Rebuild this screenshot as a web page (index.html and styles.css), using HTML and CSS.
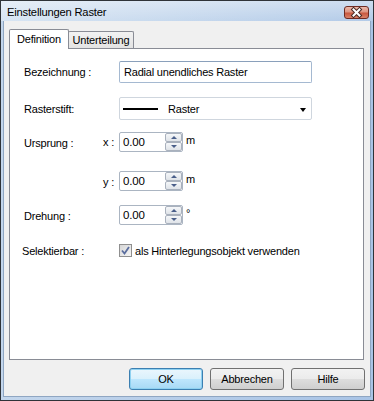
FILE: index.html
```html
<!DOCTYPE html>
<html lang="de">
<head>
  <meta charset="UTF-8">
  <title>Einstellungen Raster</title>
  <link rel="stylesheet" href="styles.css">
</head>
<body>
  <div class="window">
    <!-- Title bar -->
    <div class="titlebar">
      <span class="title">Einstellungen Raster</span>
      <div class="close-btn">
        <svg width="25" height="13" viewBox="0 0 25 13">
          <path d="M9.5 3.5 L15.5 9.5 M15.5 3.5 L9.5 9.5" stroke="#4a2a24" stroke-width="4" stroke-linecap="square"/>
          <path d="M9.5 3.5 L15.5 9.5 M15.5 3.5 L9.5 9.5" stroke="#ffffff" stroke-width="2" stroke-linecap="square"/>
        </svg>
      </div>
    </div>

    <div class="client">
      <!-- Tabs -->
      <div class="tabs">
        <div class="tab tab-active">Definition</div>
        <div class="tab">Unterteilung</div>
      </div>

      <div class="tab-panel">
        <div class="row row-name">
          <span class="field-label">Bezeichnung :</span>
          <span class="axis"></span>
          <div class="textbox">Radial unendliches Raster</div>
        </div>

        <div class="row row-pen">
          <span class="field-label">Rasterstift:</span>
          <span class="axis"></span>
          <div class="dropdown">
            <span class="pen-line"></span>
            <span class="dropdown-text">Raster</span>
            <span class="dropdown-arrow"></span>
          </div>
        </div>

        <div class="row row-x">
          <span class="field-label">Ursprung :</span>
          <span class="axis">x :</span>
          <div class="spin">
            <span class="spin-value">0.00</span>
            <span class="spin-buttons">
              <span class="spin-btn"><span class="arrow-up"></span></span>
              <span class="spin-btn"><span class="arrow-down"></span></span>
            </span>
          </div>
          <span class="unit">m</span>
        </div>

        <div class="row row-y">
          <span class="field-label"></span>
          <span class="axis">y :</span>
          <div class="spin">
            <span class="spin-value">0.00</span>
            <span class="spin-buttons">
              <span class="spin-btn"><span class="arrow-up"></span></span>
              <span class="spin-btn"><span class="arrow-down"></span></span>
            </span>
          </div>
          <span class="unit">m</span>
        </div>

        <div class="row row-angle">
          <span class="field-label">Drehung :</span>
          <span class="axis"></span>
          <div class="spin">
            <span class="spin-value">0.00</span>
            <span class="spin-buttons">
              <span class="spin-btn"><span class="arrow-up"></span></span>
              <span class="spin-btn"><span class="arrow-down"></span></span>
            </span>
          </div>
          <span class="unit">°</span>
        </div>

        <div class="row row-select">
          <span class="field-label label-select">Selektierbar :</span>
          <span class="axis"></span>
          <span class="checkbox">
            <svg width="9" height="9" viewBox="0 0 9 9">
              <path d="M1 4.5 L3.5 7.5 L8 1" fill="none" stroke="#5a6d9e" stroke-width="1.8"/>
            </svg>
          </span>
          <span class="check-text">als Hinterlegungsobjekt verwenden</span>
        </div>
      </div>

      <!-- Buttons -->
      <div class="button-row">
        <div class="btn btn-default">OK</div>
        <div class="btn">Abbrechen</div>
        <div class="btn">Hilfe</div>
      </div>
    </div>
  </div>
</body>
</html>
```

FILE: styles.css
```css
/* Global */
* {
  margin: 0;
  padding: 0;
  box-sizing: border-box;
}

body {
  background-color: white;
  font-family: 'Liberation Sans', Arial, sans-serif;
  font-size: 11px;
  letter-spacing: -0.2px;
  color: #000;
}

/* Window frame */
.window {
  width: 374px;
  height: 401px;
  border: 1px solid #2f3338;
  background: linear-gradient(to right, #c3d6ec, #a9c4e6);
  padding: 0 3px 3px 3px;
  display: flex;
  flex-direction: column;
}

.titlebar {
  height: 21px;
  display: flex;
  align-items: center;
  justify-content: space-between;
  margin: 0 -3px;
  padding-left: 6px;
  padding-right: 4px;
  background:
    linear-gradient(to bottom, rgba(255, 255, 255, 0.35), rgba(255, 255, 255, 0)),
    linear-gradient(to right, #d8e5f3, #b3cbe8);
}

.title {
  font-size: 11.2px;
  color: #000;
  margin-top: 2px;
}

.close-btn {
  width: 25px;
  height: 13px;
  margin-top: 2px;
  border: 1px solid #6e2b22;
  border-radius: 3px;
  background: linear-gradient(to bottom, #ecb8aa 0%, #dd9582 45%, #c8583f 55%, #d98168 100%);
  display: flex;
  align-items: center;
  justify-content: center;
  overflow: hidden;
}

.close-btn svg {
  margin: -1px;
}

.client {
  flex: 1;
  background-color: #f0f0f0;
  border-left: 1px solid #8fa6c2;
  border-right: 1px solid #8fa6c2;
  border-bottom: 1px solid #8fa6c2;
  margin: 0 -1px;
  padding: 8px 6px 6px 5px;
  display: flex;
  flex-direction: column;
}

/* Tabs */
.tabs {
  height: 19px;
  display: flex;
  align-items: flex-end;
  position: relative;
  z-index: 1;
}

.tab {
  height: 17px;
  width: 66px;
  margin-left: -1px;
  border: 1px solid #898c95;
  border-bottom: none;
  border-radius: 2px 2px 0 0;
  background: linear-gradient(to bottom, #f2f2f2, #e3e3e3);
  text-align: center;
  line-height: 16px;
}

.tab-active {
  height: 20px;
  width: 60px;
  margin-left: 0;
  margin-bottom: -1px;
  background: white;
  position: relative;
  z-index: 2;
  line-height: 18px;
}

.tab-panel {
  height: 312px;
  border: 1px solid #898c95;
  background-color: white;
  padding: 12px 0 0 14px;
}

/* Form rows */
.row {
  display: flex;
  align-items: center;
}

.row-pen {
  margin-top: 14px;
}

.row-x {
  margin-top: 12px;
}

.row-y {
  margin-top: 19px;
}

.row-angle {
  margin-top: 14px;
}

.row-select {
  margin-top: 19px;
}

.field-label {
  width: 76px;
  flex-shrink: 0;
}

.label-select {
  margin-left: -2px;
  width: 78px;
}

.axis {
  width: 19px;
  padding-left: 3px;
  flex-shrink: 0;
}

.row-x .field-label,
.row-angle .field-label {
  margin-top: 2px;
}

.row-y .axis {
  margin-top: 2px;
}

.textbox {
  width: 193px;
  height: 22px;
  border: 1px solid #a5b9d1;
  border-top-color: #8aa0bb;
  border-radius: 2px;
  padding-left: 4px;
  line-height: 20px;
}

.dropdown {
  width: 193px;
  height: 23px;
  border: 1px solid #cfd6de;
  border-radius: 2px;
  display: flex;
  align-items: center;
  padding: 0 5px 0 3px;
}

.pen-line {
  width: 35px;
  height: 2px;
  background-color: #000;
  margin-top: 1px;
}

.dropdown-text {
  margin-left: 10px;
  flex: 1;
}

.dropdown-arrow {
  width: 0;
  height: 0;
  border-left: 3.5px solid transparent;
  border-right: 3.5px solid transparent;
  border-top: 4px solid #000;
  margin-top: 2px;
}

/* Spin boxes */
.spin {
  width: 64px;
  height: 20px;
  border: 1px solid #abb5c2;
  border-radius: 2px;
  display: flex;
}

.spin-value {
  flex: 1;
  padding-left: 3px;
  line-height: 18px;
  font-size: 11.5px;
}

.spin-buttons {
  width: 17px;
  display: flex;
  flex-direction: column;
}

.spin-btn {
  flex: 1;
  border: 1px solid #a9b1bd;
  border-radius: 2px;
  background: linear-gradient(to bottom, #f5f7f9, #dfe3e8);
  display: flex;
  align-items: center;
  justify-content: center;
}

.arrow-up {
  width: 0;
  height: 0;
  border-left: 3px solid transparent;
  border-right: 3px solid transparent;
  border-bottom: 3px solid #4a5f8a;
}

.arrow-down {
  width: 0;
  height: 0;
  border-left: 3px solid transparent;
  border-right: 3px solid transparent;
  border-top: 3px solid #4a5f8a;
}

.unit {
  align-self: flex-start;
  margin-left: 3px;
  margin-top: 2px;
  line-height: 12px;
}

/* Checkbox */
.checkbox {
  width: 13px;
  height: 13px;
  border: 1px solid #8f8f8f;
  background: linear-gradient(to bottom right, #d6d6d6, #f5f5f5);
  display: flex;
  align-items: center;
  justify-content: center;
  flex-shrink: 0;
}

.check-text {
  margin-left: 3px;
}

/* Dialog buttons */
.button-row {
  margin-top: 8px;
  display: flex;
  justify-content: flex-end;
  gap: 7px;
  margin-right: -1px;
}

.btn {
  width: 74px;
  height: 22px;
  border: 1px solid #707070;
  border-radius: 3px;
  background: linear-gradient(to bottom, #f2f2f2 0%, #ebebeb 50%, #dddddd 51%, #cfcfcf 100%);
  text-align: center;
  line-height: 20px;
}

.btn-default {
  border-color: #3c7fb1;
  background: linear-gradient(to bottom, #eaf6fd 0%, #d9f0fc 50%, #bee6fd 51%, #a7d9f5 100%);
  box-shadow: inset 0 0 0 1px #8ed1f1;
}
```
